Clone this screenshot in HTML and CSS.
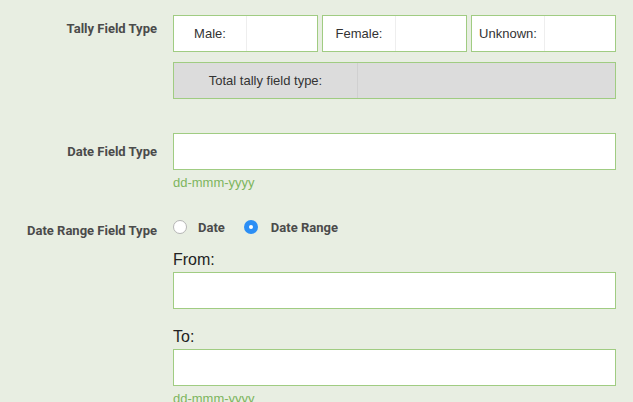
FILE: index.html
```html
<!DOCTYPE html>
<html>
<head>
<meta charset="utf-8">
<link rel="stylesheet" href="styles.css">
</head>
<body>
<div class="form">
  <div class="row row-tally">
    <div class="label">Tally Field Type</div>
    <div class="field">
      <div class="tally-grid">
        <div class="tbox"><span class="tlabel">Male:</span><span class="tinput"></span></div>
        <div class="tbox"><span class="tlabel">Female:</span><span class="tinput"></span></div>
        <div class="tbox"><span class="tlabel">Unknown:</span><span class="tinput"></span></div>
      </div>
      <div class="tbox total"><span class="tlabel wide">Total tally field type:</span><span class="tinput"></span></div>
    </div>
  </div>

  <div class="row row-date">
    <div class="label label-input">Date Field Type</div>
    <div class="field">
      <div class="input"></div>
      <div class="hint">dd-mmm-yyyy</div>
    </div>
  </div>

  <div class="row row-range">
    <div class="label label-radio">Date Range Field Type</div>
    <div class="field">
      <div class="radios">
        <span class="radio"></span><span class="rlabel">Date</span>
        <span class="radio checked"></span><span class="rlabel">Date Range</span>
      </div>
      <div class="sub">From:</div>
      <div class="input"></div>
      <div class="sub sub-to">To:</div>
      <div class="input"></div>
      <div class="hint">dd-mmm-yyyy</div>
    </div>
  </div>
</div>
</body>
</html>
```

FILE: styles.css
```css
html, body {
  margin: 0;
  padding: 0;
  background: #e8eee2;
  overflow: hidden;
}
.form {
  padding-top: 15px;
}
.row {
  display: grid;
  grid-template-columns: 157px 443px;
  column-gap: 16px;
}
.label {
  font-family: Roboto, sans-serif;
  font-weight: 700;
  font-size: 13px;
  color: #4b4b4b;
  text-align: right;
  padding-top: 6px;
  line-height: 15px;
}
.label-input {
  padding-top: 11px;
}
.label-radio {
  padding-top: 4px;
}
.tally-grid {
  display: grid;
  grid-template-columns: repeat(3, 1fr);
  column-gap: 4px;
}
.tbox {
  display: flex;
  height: 37px;
  box-sizing: border-box;
  border: 1px solid #a0cc82;
  background: #fff;
  font-family: "Liberation Sans", Arial, sans-serif;
  font-size: 13px;
  color: #333;
}
.tlabel {
  width: 72px;
  flex: none;
  display: flex;
  align-items: center;
  justify-content: center;
  border-right: 1px solid #eeeeee;
}
.tlabel.wide {
  width: 183px;
}
.tinput {
  flex: 1;
}
.total {
  margin-top: 10px;
  background: #dcdcdc;
}
.total .tlabel {
  border-right-color: #d0d0d0;
}
.row-date {
  margin-top: 34px;
}
.input {
  height: 37px;
  box-sizing: border-box;
  border: 1px solid #a0cc82;
  background: #fff;
}
.hint {
  font-family: "Liberation Sans", Arial, sans-serif;
  font-size: 13px;
  color: #7db55e;
  margin-top: 5px;
  line-height: 16px;
}
.row-range {
  margin-top: 28px;
}
.radios {
  display: flex;
  align-items: center;
  height: 16px;
}
.radio {
  width: 14px;
  height: 14px;
  box-sizing: border-box;
  border-radius: 50%;
  border: 1px solid #b5b5b5;
  background: #fff;
  flex: none;
  position: relative;
}
.radio.checked {
  border: none;
  background: #2b8ef5;
}
.radio.checked::after {
  content: "";
  position: absolute;
  left: 5px;
  top: 5px;
  width: 4px;
  height: 4px;
  border-radius: 50%;
  background: #fff;
}
.rlabel {
  font-family: Roboto, sans-serif;
  font-weight: 700;
  font-size: 13px;
  color: #4b4b4b;
  margin-left: 11px;
  margin-right: 19px;
}
.rlabel:last-child {
  margin-left: 13px;
}
.sub {
  font-family: "Liberation Sans", Arial, sans-serif;
  font-size: 16px;
  color: #222;
  margin-top: 16px;
  line-height: 18px;
  margin-bottom: 3px;
}
.sub-to {
  margin-top: 19px;
}
```
